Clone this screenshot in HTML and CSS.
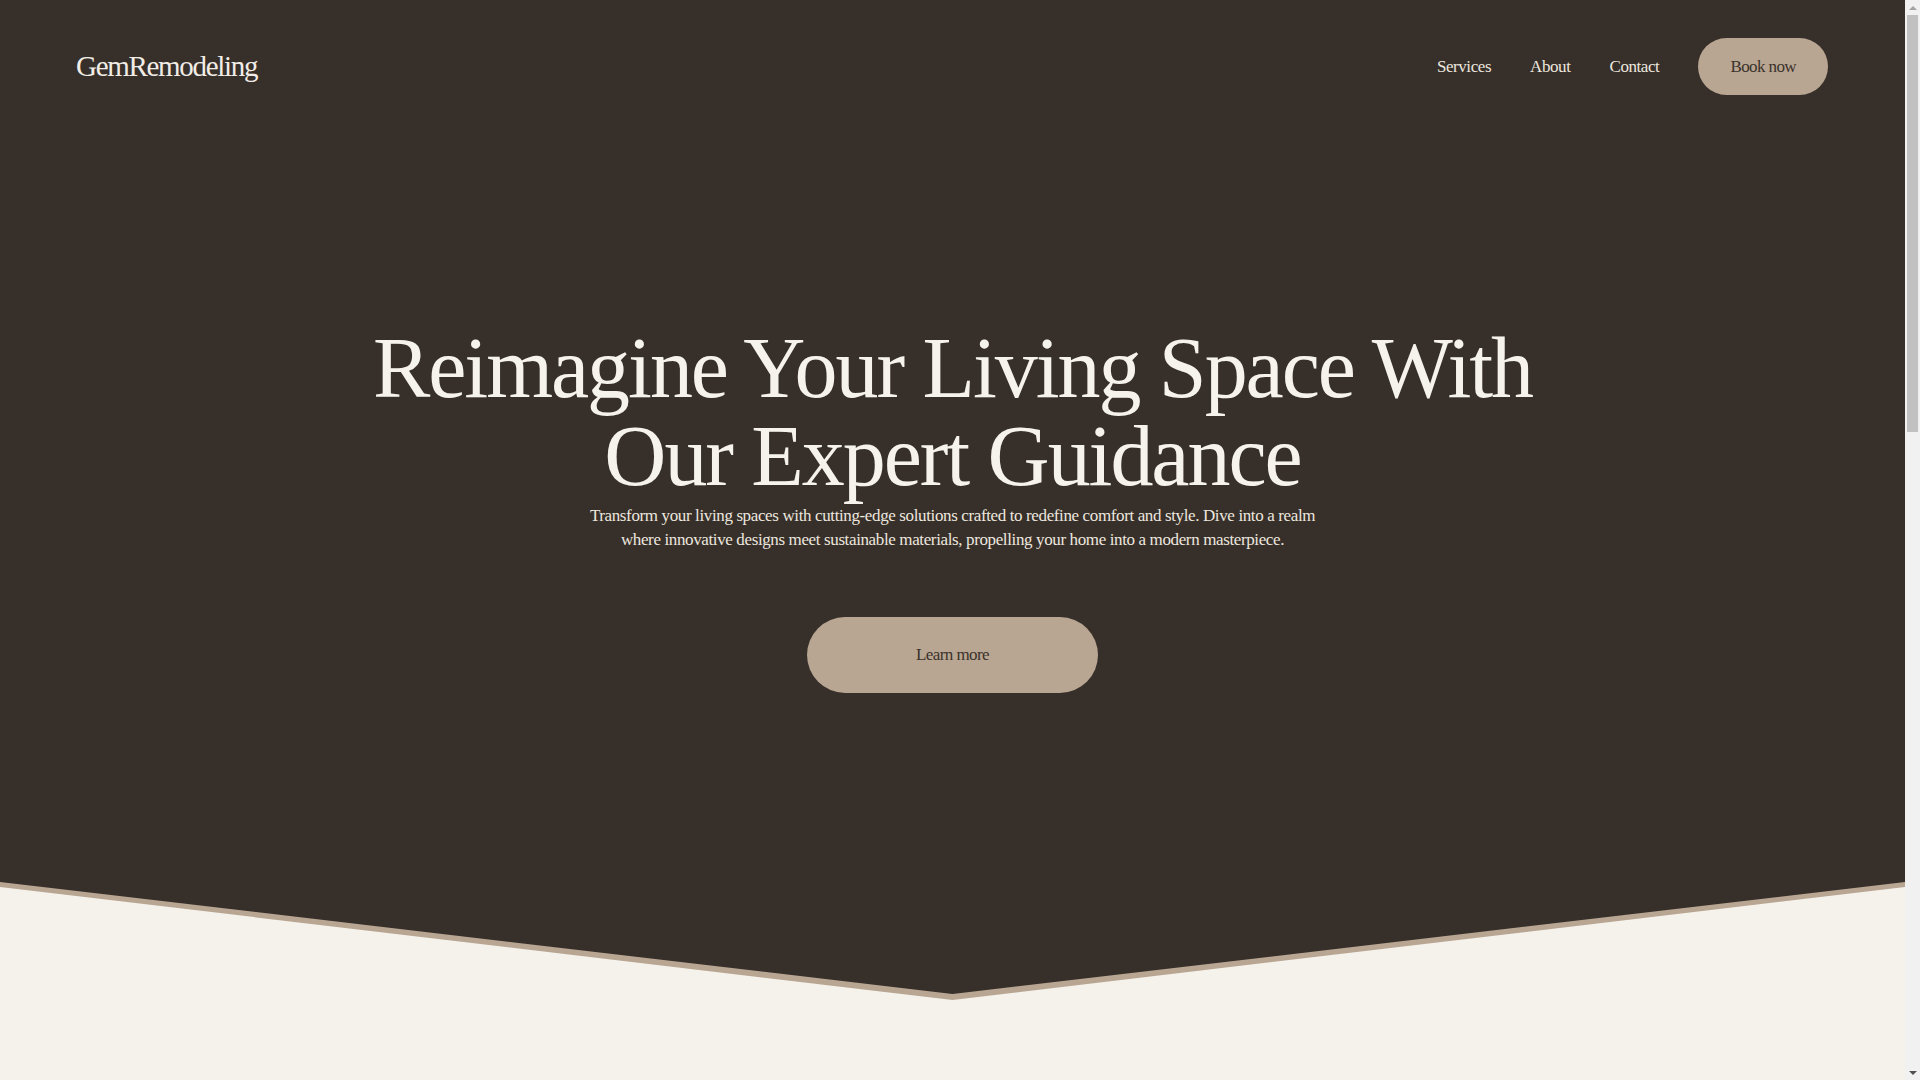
FILE: index.html
```html
<!DOCTYPE html>
<html lang="en">
<head>
<meta charset="utf-8">
<title>GemRemodeling</title>
<link rel="stylesheet" href="styles.css">
</head>
<body>
<div class="hero-wrap">
  <section class="hero">
    <header class="topbar">
      <a class="logo" href="#">GemRemodeling</a>
      <nav class="nav">
        <a class="nav-link" href="#">Services</a>
        <a class="nav-link" href="#">About</a>
        <a class="nav-link" href="#">Contact</a>
        <a class="btn btn-book" href="#">Book now</a>
      </nav>
    </header>
    <div class="hero-content">
      <h1 class="hero-title">Reimagine Your Living Space With<br>Our Expert Guidance</h1>
      <p class="hero-text">Transform your living spaces with cutting-edge solutions crafted to redefine comfort and style. Dive into a realm where innovative designs meet sustainable materials, propelling your home into a modern masterpiece.</p>
      <a class="btn btn-learn" href="#">Learn more</a>
    </div>
  </section>
</div>
<section class="next"></section>
<div class="scrollbar" aria-hidden="true">
  <span class="sb-arrow sb-up"></span>
  <span class="sb-thumb"></span>
  <span class="sb-fill"></span>
  <span class="sb-arrow sb-down"></span>
</div>
</body>
</html>
```

FILE: styles.css
```css
html, body {
  margin: 0;
  padding: 0;
}
body {
  margin-right: 15px;
  background: #f5f2ec;
  font-family: "Liberation Serif", "Times New Roman", serif;
  color: #f3efe8;
}
a {
  text-decoration: none;
  color: inherit;
}
.hero-wrap {
  background: #b8a692;
  height: 1000px;
  clip-path: polygon(0 0, 100% 0, 100% 887px, 50% 1000px, 0 887px);
}
.hero {
  background: #372f2a;
  height: 1000px;
  clip-path: polygon(0 0, 100% 0, 100% 882px, 50% 994px, 0 882px);
  display: flex;
  flex-direction: column;
}
.topbar {
  display: flex;
  align-items: center;
  justify-content: space-between;
  padding: 38px 77px 38px 76px;
}
.logo {
  font-size: 29px;
  letter-spacing: -0.045em;
  color: #f1ede6;
}
.nav {
  display: flex;
  align-items: center;
  gap: 39px;
}
.nav-link {
  font-size: 17px;
  letter-spacing: -0.025em;
  color: #ece7df;
}
.btn {
  display: inline-block;
  background: #b8a692;
  color: #3b322c;
  border-radius: 999px;
  font-size: 17px;
  letter-spacing: -0.035em;
  line-height: 24px;
}
.btn-book {
  padding: 16.5px 32px;
}
.hero-content {
  display: flex;
  flex-direction: column;
  align-items: center;
  text-align: center;
  padding-top: 191px;
}
.hero-title {
  margin: 0;
  font-weight: 400;
  font-size: 86px;
  line-height: 88px;
  letter-spacing: -0.024em;
  color: #f6f3ec;
}
.hero-text {
  margin: 4px 0 0;
  max-width: 740px;
  font-size: 17px;
  line-height: 23.5px;
  letter-spacing: -0.022em;
  color: #ece7df;
}
.btn-learn {
  margin-top: 66px;
  padding: 26px 109px;
}
.next {
  height: 1720px;
}
.scrollbar {
  position: fixed;
  top: 0;
  right: 0;
  width: 15px;
  height: 100vh;
  background: #f1f1f1;
  display: flex;
  flex-direction: column;
  align-items: center;
}
.sb-arrow {
  flex: 0 0 15px;
  width: 15px;
  display: flex;
  align-items: center;
  justify-content: center;
}
.sb-arrow::before {
  content: "";
  width: 0;
  height: 0;
  border-left: 4px solid transparent;
  border-right: 4px solid transparent;
}
.sb-up::before {
  border-bottom: 4px solid #a3a3a3;
}
.sb-down::before {
  border-top: 4px solid #505050;
}
.sb-thumb {
  flex: 0 0 417px;
  width: 11px;
  background: #c1c1c1;
}
.sb-fill {
  flex: 1;
}
```
